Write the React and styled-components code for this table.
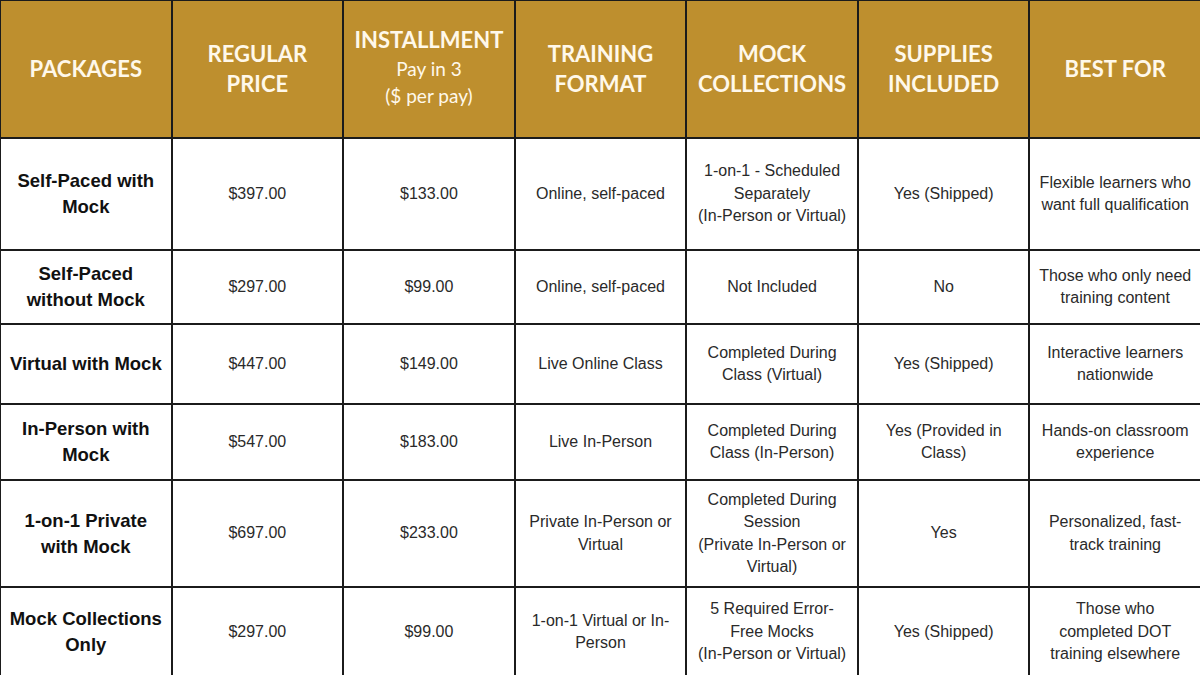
import React from "react";
import styled, { createGlobalStyle } from "styled-components";

const GlobalStyle = createGlobalStyle`
  html, body {
    margin: 0;
    padding: 0;
    background: #ffffff;
  }
  body {
    font-family: "Liberation Sans", Arial, sans-serif;
  }
`;

const headers = [
  { title: ["PACKAGES"] },
  { title: ["REGULAR", "PRICE"] },
  { title: ["INSTALLMENT"], sub: ["Pay in 3", "($ per pay)"] },
  { title: ["TRAINING", "FORMAT"] },
  { title: ["MOCK", "COLLECTIONS"] },
  { title: ["SUPPLIES", "INCLUDED"] },
  { title: ["BEST FOR"] },
];

const rows = [
  {
    height: 110,
    cells: [
      ["Self-Paced with", "Mock"],
      "$397.00",
      "$133.00",
      "Online, self-paced",
      ["1-on-1 - Scheduled", "Separately", "(In-Person or Virtual)"],
      "Yes (Shipped)",
      ["Flexible learners who", "want full qualification"],
    ],
  },
  {
    height: 72,
    cells: [
      ["Self-Paced", "without Mock"],
      "$297.00",
      "$99.00",
      "Online, self-paced",
      "Not Included",
      "No",
      ["Those who only need", "training content"],
    ],
  },
  {
    height: 78,
    cells: [
      "Virtual with Mock",
      "$447.00",
      "$149.00",
      "Live Online Class",
      ["Completed During", "Class (Virtual)"],
      "Yes (Shipped)",
      ["Interactive learners", "nationwide"],
    ],
  },
  {
    height: 74,
    cells: [
      ["In-Person with", "Mock"],
      "$547.00",
      "$183.00",
      "Live In-Person",
      ["Completed During", "Class (In-Person)"],
      ["Yes (Provided in", "Class)"],
      ["Hands-on classroom", "experience"],
    ],
  },
  {
    height: 105,
    cells: [
      ["1-on-1 Private", "with Mock"],
      "$697.00",
      "$233.00",
      ["Private In-Person or", "Virtual"],
      ["Completed During", "Session", "(Private In-Person or", "Virtual)"],
      "Yes",
      ["Personalized, fast-", "track training"],
    ],
  },
  {
    height: 88,
    cells: [
      ["Mock Collections", "Only"],
      "$297.00",
      "$99.00",
      ["1-on-1 Virtual or In-", "Person"],
      ["5 Required Error-", "Free Mocks", "(In-Person or Virtual)"],
      "Yes (Shipped)",
      ["Those who", "completed DOT", "training elsewhere"],
    ],
  },
];

const Table = styled.div`
  display: grid;
  grid-template-columns: repeat(7, minmax(0, 1fr));
  grid-template-rows: 136px ${rows.map((r) => `${r.height}px`).join(" ")};
  gap: 2px;
  width: 1200px;
  height: 675px;
  overflow: hidden;
  box-sizing: border-box;
  padding: 1px 0 0 1px;
  background: #1b1b1b;
`;

const HeadCell = styled.div`
  display: flex;
  flex-direction: column;
  align-items: center;
  justify-content: center;
  background: #be8f2e;
  color: #fff8ea;
  font-family: Lato, "Liberation Sans", sans-serif;
  text-align: center;
  padding-bottom: ${(p) => (p.$stacked ? "4px" : "0")};
`;

const HeadTitle = styled.span`
  font-size: 22px;
  font-weight: 700;
  line-height: 30px;
`;

const HeadSub = styled.span`
  font-size: 19px;
  font-weight: 400;
  line-height: 27px;
`;

const Cell = styled.div`
  display: flex;
  flex-direction: column;
  align-items: center;
  justify-content: center;
  background: #ffffff;
  text-align: center;
  color: ${(p) => (p.$label ? "#111111" : "#2a2a2a")};
  font-size: ${(p) => (p.$label ? "18.5px" : "16px")};
  font-weight: ${(p) => (p.$label ? 700 : 400)};
  line-height: ${(p) => (p.$label ? "26px" : "22.5px")};
  white-space: nowrap;
`;

const lines = (v) => (Array.isArray(v) ? v : [v]);

export default function App() {
  return (
    <>
      <GlobalStyle />
      <Table>
        {headers.map((h, i) => (
          <HeadCell key={`h${i}`} $stacked={!!h.sub}>
            {h.title.map((t) => (
              <HeadTitle key={t}>{t}</HeadTitle>
            ))}
            {h.sub &&
              h.sub.map((s) => <HeadSub key={s}>{s}</HeadSub>)}
          </HeadCell>
        ))}
        {rows.map((r, ri) =>
          r.cells.map((c, ci) => (
            <Cell key={`${ri}-${ci}`} $label={ci === 0}>
              {lines(c).map((l) => (
                <span key={l}>{l}</span>
              ))}
            </Cell>
          ))
        )}
      </Table>
    </>
  );
}
